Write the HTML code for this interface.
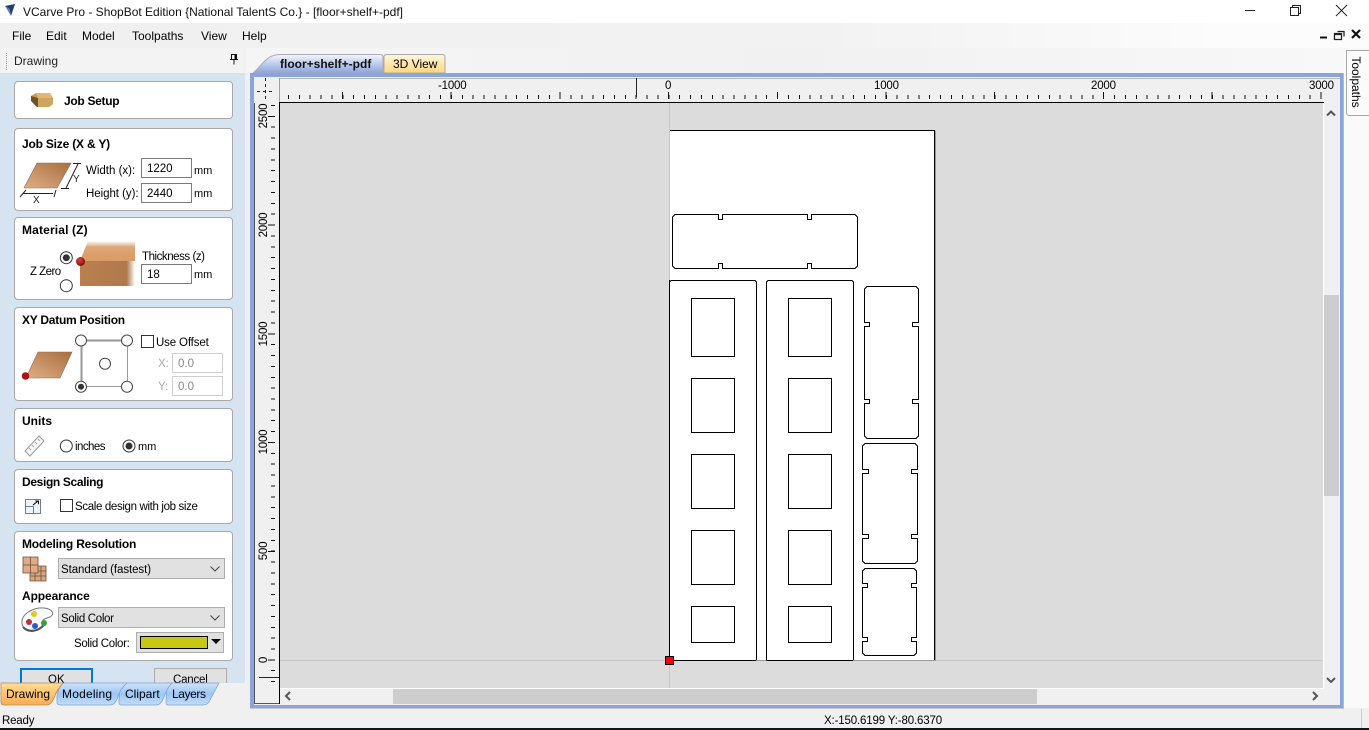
<!DOCTYPE html>
<html><head><meta charset="utf-8"><style>
html,body{margin:0;padding:0}
body{width:1369px;height:730px;overflow:hidden;position:relative;background:#f0f0f0;font:12px "Liberation Sans",sans-serif;color:#000}
.a,.t,.card,.inp,.sel{position:absolute}
.t{white-space:nowrap;line-height:14px}
.t.s{font-size:11.5px;line-height:18px}
.b{font-weight:bold}
.card{background:#fff;border:1px solid #a8a8a8;border-radius:4px;left:14px;width:217px;box-sizing:content-box}
.inp{background:#fff;border:1px solid #7a7a7a;box-sizing:border-box;width:51px;height:20px;padding-left:5px;line-height:20px;font-size:11.500px}
.inp.d{border-color:#cfcfcf;color:#888}
.sel{background:#e1e1e1;border:1px solid #adadad;box-sizing:border-box;left:58px;width:167px;height:21px;padding-left:2px;line-height:23px;font-size:11.500px}
.sel svg{position:absolute;right:3px;top:6px}
.v{position:absolute;transform:rotate(-90deg);transform-origin:center;width:40px;text-align:center;line-height:14px;left:244px;font-size:11.500px;letter-spacing:-.2px}
.r{font-size:11.500px;letter-spacing:-.2px}
svg{position:absolute;overflow:visible}
</style></head><body>

<div class="a" style="left:0;top:0;width:1369px;height:23px;background:#fff"></div>
<svg style="left:0;top:0" width="20" height="20"><path d="M5 6 L15 4 L11 16 L9.5 9 Z" fill="#1f3f70"/><path d="M5 6 L9.5 9 L11 16 Z" fill="#5a7fae"/></svg>
<div class="t" style="left:23px;top:5px;color:#111">VCarve Pro - ShopBot Edition {National TalentS Co.} - [floor+shelf+-pdf]</div>
<svg style="left:1240px;top:0" width="120" height="23" fill="none" stroke="#222"><path d="M5 10.5H15" /><path d="M50.5 7.5h8v8h-8zM52.5 7.5v-2h8v8h-2"/><path d="M96 5L107 16M107 5L96 16"/></svg>

<div class="a" style="left:0;top:23px;width:1369px;height:25px;background:linear-gradient(90deg,#f0f0f0 0,#f2f2f2 60%,#fcfcfc 90%)"></div>
<div class="t" style="left:12px;top:29px">File</div>
<div class="t" style="left:46px;top:29px">Edit</div>
<div class="t" style="left:82px;top:29px">Model</div>
<div class="t" style="left:132px;top:29px">Toolpaths</div>
<div class="t" style="left:201px;top:29px">View</div>
<div class="t" style="left:242px;top:29px">Help</div>
<svg style="left:1315px;top:28px" width="50" height="14"><path d="M5 9.5h7" stroke="#111" stroke-width="2" fill="none"/><path d="M19.5 5.5h7v6h-7zM19.5 6.500h7M22.5 3.500h6.500v5" stroke="#222" stroke-width="1.300" fill="none"/><path d="M37 2L45 10M45 2L37 10" stroke="#111" stroke-width="2.200" fill="none"/></svg>

<div class="a" style="left:246px;top:48px;width:1100px;height:25px;background:linear-gradient(90deg,#f5f5f5,#f1f1f1 50%,#f8f8f8)"></div>
<div class="a" style="left:1344px;top:48px;width:25px;height:660px;background:#fafafa"></div>

<!-- left panel -->
<div class="a" style="left:1px;top:48px;width:244px;height:25px;background:#f3f3f3;border-radius:3px 3px 0 0"></div>
<div class="a" style="left:6px;top:53px;width:1px;height:17px;border-left:1px dotted #999"></div>
<div class="t" style="left:14px;top:54px;color:#222">Drawing</div>
<svg style="left:228px;top:53px" width="12" height="14"><path d="M3.500 1.500h5v5h-5zM2 6.500h8M6 6.500v5" stroke="#111" fill="none"/><path d="M6.500 2h2v4h-2z" fill="#111"/></svg>
<div class="a" style="left:0;top:73px;width:245px;height:610px;background:#d6e3f1"></div>

<div class="card" style="top:81px;height:36px"></div>
<svg style="left:28px;top:90px" width="26" height="20"><path d="M3 6L8 3H22L25 8V14L21 17H9L3 11Z" fill="#c89a55"/><path d="M8 3H22L25 8H10Z" fill="#e0b870"/><path d="M3 6L10 8V17H9L3 11Z" fill="#6b5330"/><path d="M10 8H25V14L21 17H10Z" fill="#cfa45f"/></svg>
<div class="t b" style="left:64px;top:94px;letter-spacing:-.3px">Job Setup</div>

<div class="card" style="top:128px;height:81px"></div>
<div class="t b" style="left:22px;top:137px;letter-spacing:-.2px">Job Size (X &amp; Y)</div>
<svg style="left:18px;top:158px" width="66" height="50"><defs><linearGradient id="w" x1="1" y1="0" x2="0" y2="1"><stop offset="0" stop-color="#a86f3f"/><stop offset="1" stop-color="#e0ae86"/></linearGradient></defs><path d="M19 5H53L39 30H6Z" fill="url(#w)" stroke="#8a6a50" stroke-width=".6"/><path d="M55 5.500h8M43 30.500h8M60 6L48 30M8 32L2 39M38 32L36 39M5 35.500H35" stroke="#222" fill="none"/><text x="15" y="45" font-size="10" fill="#222" font-family="Liberation Sans">X</text><text x="55" y="24" font-size="10" fill="#222" font-family="Liberation Sans">Y</text></svg>
<div class="t s" style="left:86px;top:162px">Width (x):</div>
<div class="inp" style="left:141px;top:158px">1220</div>
<div class="t s" style="left:194px;top:162px;font-size:11px">mm</div>
<div class="t s" style="left:86px;top:185px;letter-spacing:-.05px">Height (y):</div>
<div class="inp" style="left:141px;top:183px">2440</div>
<div class="t s" style="left:194px;top:185px;font-size:11px">mm</div>

<div class="card" style="top:217px;height:81px"></div>
<div class="t b" style="left:22px;top:223px;letter-spacing:.15px">Material (Z)</div>
<svg style="left:56px;top:238px" width="84" height="52"><defs><linearGradient id="m" x1="0" y1="0" x2="1" y2="0"><stop offset="0" stop-color="#b97f4e"/><stop offset=".85" stop-color="#b07a4c"/><stop offset="1" stop-color="#fff"/></linearGradient><linearGradient id="m2" x1="0" y1="0" x2="0" y2="1"><stop offset="0" stop-color="#fff"/><stop offset=".3" stop-color="#dca777"/><stop offset="1" stop-color="#d99b62"/></linearGradient><radialGradient id="r" cx=".4" cy=".35" r=".7"><stop offset="0" stop-color="#e04040"/><stop offset="1" stop-color="#7a0808"/></radialGradient></defs><rect x="24" y="23" width="55" height="25" fill="url(#m)"/><path d="M24 23L32 3H79V23Z" fill="url(#m2)"/><circle cx="10.300" cy="19.700" r="6" fill="#fff" stroke="#333"/><circle cx="10.300" cy="19.700" r="3.500" fill="#333"/><circle cx="10.300" cy="47.700" r="6" fill="#fff" stroke="#333"/><circle cx="24.500" cy="23.500" r="4.500" fill="url(#r)"/></svg>
<div class="t s" style="left:30px;top:263px;letter-spacing:-.55px">Z Zero</div>
<div class="t s" style="left:142px;top:248px;letter-spacing:-.45px">Thickness (z)</div>
<div class="inp" style="left:141px;top:264px">18</div>
<div class="t s" style="left:194px;top:266px;font-size:11px">mm</div>

<div class="card" style="top:307px;height:92px"></div>
<div class="t b" style="left:22px;top:313px;letter-spacing:-.25px">XY Datum Position</div>
<svg style="left:18px;top:330px" width="120" height="62"><defs><linearGradient id="w2" x1="1" y1="0" x2="0" y2="1"><stop offset="0" stop-color="#a86f3f"/><stop offset="1" stop-color="#e0ae86"/></linearGradient></defs><path d="M20 22H54L42 48H8Z" fill="url(#w2)" stroke="#8a6a50" stroke-width=".6"/><circle cx="7.500" cy="46" r="3.800" fill="#a81515"/><path d="M63.500 10.500V56.500M63.500 10.500H109.500" stroke="#999" stroke-width="2" fill="none"/><path d="M109.500 10.500V56.500H63.500" stroke="#999" fill="none"/><g fill="#fff" stroke="#444"><circle cx="63" cy="10.500" r="5.500"/><circle cx="109" cy="10.500" r="5.500"/><circle cx="87" cy="33.700" r="5.500"/><circle cx="63" cy="56.700" r="5.500"/><circle cx="109" cy="56.700" r="5.500"/></g><circle cx="63" cy="56.700" r="3" fill="#333"/></svg>
<div class="a" style="left:141px;top:335px;width:13px;height:13px;border:1px solid #333;box-sizing:border-box;background:#fff"></div>
<div class="t s" style="left:156px;top:334px;letter-spacing:-.15px">Use Offset</div>
<div class="t s" style="left:158px;top:355px;color:#aaa">X:</div>
<div class="inp d" style="left:172px;top:353px">0.0</div>
<div class="t s" style="left:158px;top:378px;color:#aaa">Y:</div>
<div class="inp d" style="left:172px;top:376px">0.0</div>

<div class="card" style="top:408px;height:52px"></div>
<div class="t b" style="left:22px;top:414px">Units</div>
<svg style="left:22px;top:433px" width="120" height="26"><path d="M3 18L17 3L22 8L8 23Z" fill="#f6f6f6" stroke="#999"/><path d="M7 15l2 2M10 12l2 2M13 9l2 2M16 6l2 2" stroke="#aaa" fill="none"/><circle cx="44.300" cy="13" r="6" fill="#fff" stroke="#333"/><circle cx="107" cy="13" r="6" fill="#fff" stroke="#333"/><circle cx="107" cy="13" r="3.500" fill="#333"/></svg>
<div class="t s" style="left:75px;top:438px;letter-spacing:-.55px">inches</div>
<div class="t s" style="left:138px;top:438px;font-size:11px">mm</div>

<div class="card" style="top:469px;height:53px"></div>
<div class="t b" style="left:22px;top:475px;letter-spacing:-.35px">Design Scaling</div>
<svg style="left:24px;top:497px" width="20" height="18"><rect x="1.500" y="2.500" width="15" height="14" fill="#eef3f8" stroke="#6d7f95"/><path d="M1.500 9.500H9.500V16.500M9 8L14 4M11 4h3.500v3.500" stroke="#6d7f95" fill="none"/><path d="M9 8L14 4M11.500 4h3v3" stroke="#111" fill="none"/></svg>
<div class="a" style="left:60px;top:499px;width:13px;height:13px;border:1px solid #333;box-sizing:border-box;background:#fff"></div>
<div class="t s" style="left:75px;top:498px;letter-spacing:-.35px">Scale design with job size</div>

<div class="card" style="top:531px;height:128px"></div>
<div class="t b" style="left:22px;top:537px;letter-spacing:-.2px">Modeling Resolution</div>
<svg style="left:22px;top:556px" width="26" height="28"><path d="M8 10H24V25H8Z" fill="#dba67f" stroke="#6b5040" stroke-width=".8"/><path d="M8 15H24M8 20H24M13 10V25M19 10V25" stroke="#6b5040" stroke-width=".8" fill="none"/><path d="M1 1H16V17H1Z" fill="#e3ab85" stroke="#6b5040" stroke-width=".8"/><path d="M1 9H16M8.500 1V17" stroke="#6b5040" stroke-width=".8" fill="none"/></svg>
<div class="sel" style="top:558px;letter-spacing:-.08px">Standard (fastest)<svg width="12" height="8"><path d="M1.500 1.500L6 6L10.500 1.500" fill="none" stroke="#444"/></svg></div>
<div class="t b" style="left:22px;top:589px;letter-spacing:-.1px">Appearance</div>
<svg style="left:20px;top:605px" width="36" height="30"><path d="M2 18C1 10 12 2 24 3C33 4 35 9 30 12C25 14 22 14 23 17C24 22 16 26 10 25C5 24 2 22 2 18Z" fill="#f8f8f8" stroke="#777"/><path d="M3 22C8 28 18 27 24 20" stroke="#555" stroke-width="2" fill="none"/><circle cx="9" cy="17" r="3" fill="#c43030"/><circle cx="14" cy="9" r="3" fill="#e0c820"/><circle cx="15" cy="21" r="3" fill="#2a5ac8"/><circle cx="24" cy="18" r="3" fill="#38a038"/></svg>
<div class="sel" style="top:607px;letter-spacing:-.33px">Solid Color<svg width="12" height="8"><path d="M1.500 1.500L6 6L10.500 1.500" fill="none" stroke="#444"/></svg></div>
<div class="t s" style="left:74px;top:635px;letter-spacing:-.33px">Solid Color:</div>
<div class="a" style="left:136px;top:632px;width:88px;height:21px;background:#e1e1e1;border:1px solid #adadad;box-sizing:border-box"></div>
<div class="a" style="left:140px;top:636px;width:68px;height:13px;background:#c8c812;border:1px solid #000;box-sizing:border-box"></div>
<svg style="left:210px;top:639px" width="12" height="7"><path d="M1 0H11L6 5Z" fill="#000"/></svg>

<div class="a" style="left:20px;top:668px;width:73px;height:20px;background:#e1e1e1;border:2px solid #0078d7;box-sizing:border-box"></div>
<div class="t s" style="left:48px;top:671px">OK</div>
<div class="a" style="left:154px;top:668px;width:73px;height:20px;background:#e1e1e1;border:1px solid #adadad;box-sizing:border-box"></div>
<div class="t s" style="left:173px;top:671px;letter-spacing:-.2px">Cancel</div>

<!-- bottom tabs -->
<div class="a" style="left:0;top:683px;width:250px;height:26px;background:#f0f0f0"></div>
<svg style="left:0;top:683px" width="225" height="24"><defs><linearGradient id="bt" x1="0" y1="0" x2="0" y2="1"><stop offset="0" stop-color="#cfe3fb"/><stop offset=".5" stop-color="#9cc6f5"/><stop offset="1" stop-color="#c6dcf6"/></linearGradient><linearGradient id="ot" x1="0" y1="0" x2="0" y2="1"><stop offset="0" stop-color="#ffdc96"/><stop offset=".5" stop-color="#ffc56e"/><stop offset="1" stop-color="#f6ad59"/></linearGradient></defs>
<path d="M167 0H219L210 17Q208 22 203 22H168Q166 22 166 19Z" fill="url(#bt)" stroke="#7fa3d6" stroke-width=".8"/>
<path d="M120 0H172C168 4 166 8 164 14Q161 22 156 22H121Q119 22 119 19Z" fill="url(#bt)" stroke="#7fa3d6" stroke-width=".8"/>
<path d="M62 0H127C122 4 120 8 118 14Q115 22 110 22H60Q57 22 57 19V13Q58 6 62 0Z" fill="url(#bt)" stroke="#7fa3d6" stroke-width=".8"/>
<path d="M1 0H63C59 5 56 9 54 15Q51 22 47 22H4Q1 22 1 19Z" fill="url(#ot)" stroke="#b98a50" stroke-width=".8"/></svg>
<div class="t" style="left:6px;top:687px">Drawing</div>
<div class="t" style="left:62px;top:687px;letter-spacing:.2px">Modeling</div>
<div class="t" style="left:125px;top:687px">Clipart</div>
<div class="t" style="left:172px;top:687px;letter-spacing:-.4px">Layers</div>

<!-- doc tabs -->
<svg style="left:250px;top:52px" width="200" height="22"><defs><linearGradient id="dt" x1="0" y1="0" x2="0" y2="1"><stop offset="0" stop-color="#f3f6fc"/><stop offset="1" stop-color="#8aa5de"/></linearGradient><linearGradient id="yt" x1="0" y1="0" x2="0" y2="1"><stop offset="0" stop-color="#fff6e0"/><stop offset="1" stop-color="#ffd679"/></linearGradient></defs>
<path d="M134 21V5Q134 2.500 137 2.500H192Q195 2.500 195 5V21Z" fill="url(#yt)" stroke="#aaa"/>
<path d="M3 21C12 14 16 2.500 30 2.500H130Q133 2.500 133 5V21Z" fill="url(#dt)" stroke="#aab"/></svg>
<div class="t b" style="left:280px;top:57px;color:#111">floor+shelf+-pdf</div>
<div class="t" style="left:393px;top:57px">3D View</div>

<!-- toolpaths tab -->
<div class="a" style="left:1346px;top:50px;width:24px;height:66px;background:#fbfbfb;border:1px solid #a8a8a8;border-radius:0 0 0 3px;box-sizing:border-box"></div>
<div class="t" style="left:1328px;top:75px;width:56px;text-align:center;transform:rotate(90deg)">Toolpaths</div>

<!-- frame -->
<div class="a" style="left:250px;top:73px;width:1093px;height:635px;background:#8aa5de"></div>
<div class="a" style="left:1343px;top:73px;width:1px;height:636px;background:#bbb"></div>
<div class="a" style="left:250px;top:708px;width:1094px;height:1px;background:#c8c8c8"></div>
<div class="a" style="left:254px;top:77px;width:1086px;height:628px;background:#f0f0f0"></div>
<div class="a" style="left:254px;top:103px;width:1px;height:600px;background:#555"></div>
<div class="a" style="left:254px;top:703px;width:26px;height:1px;background:#555"></div>

<!-- canvas -->
<div class="a" style="left:280px;top:103px;width:1043px;height:585px;background:#dcdcdc"></div>
<div class="a" style="left:279px;top:102px;width:1045px;height:1px;background:#000"></div>
<div class="a" style="left:279px;top:102px;width:1px;height:602px;background:#000"></div>
<div class="a" style="left:280px;top:688px;width:1044px;height:1px;background:#fff"></div>
<div class="a" style="left:1323px;top:103px;width:1px;height:586px;background:#fff"></div>

<!-- scrollbars -->
<div class="a" style="left:1324px;top:295px;width:15px;height:201px;background:#cdcdcd"></div>
<div class="a" style="left:393px;top:689px;width:644px;height:15px;background:#cdcdcd"></div>
<svg style="left:0;top:0" width="1369" height="730" fill="none" stroke="#555" stroke-width="2"><path d="M1327 115.500L1331 111.500L1335 115.500M1327 678L1331 682L1335 678M1313 692L1317 696L1313 700M290 692L286 696L290 700"/></svg>

<!-- drawing -->
<svg style="left:0;top:0" width="1369" height="730">
<path d="M670 130H934V660H670Z" fill="#fff"/>
<path d="M669.500 103V688M280 660.500H1323" stroke="#c8c8c8" fill="none" shape-rendering="crispEdges"/>
<path d="M670 130H934V660H670Z" fill="#fff"/>
<g fill="none" stroke="#000" shape-rendering="crispEdges">
<path d="M670 130.500H934.500V660" />
<path d="M669.500 280V660.500H756.500M766.500 660.500H853.500"/>
<path d="M675 214.500H718.500V219.500H722.500V214.500H807.500V219.500H811.500V214.500H855L857.500 217V266L855 268.500H811.500V263.500H807.500V268.500H722.500V263.500H718.500V268.500H675L672.500 266V217Z"/>
<path d="M669.500 660.500V282L671 280.500H755L756.500 282V660.500"/>
<path d="M766.500 660.500V282L768 280.500H852L853.500 282V660.500"/>
<path d="M691.500 298.500H734.500V356.500H691.500ZM691.500 378.500H734.500V432.500H691.500ZM691.500 454.500H734.500V508.500H691.500ZM691.500 530.500H734.500V584.500H691.500ZM691.500 606.500H734.500V642.500H691.500Z"/>
<path d="M788.500 298.500H831.500V356.500H788.500ZM788.500 378.500H831.500V432.500H788.500ZM788.500 454.500H831.500V508.500H788.500ZM788.500 530.500H831.500V584.500H788.500ZM788.500 606.500H831.500V642.500H788.500Z"/>
<path d="M867 286.500H916L918.500 289V322.500H912.500V326.500H918.500V399.500H912.500V403.500H918.500V436L916 438.500H867L864.500 436V403.500H869.500V399.500H864.500V326.500H869.500V322.500H864.500V289Z"/>
<path d="M865 443.500H915L917.500 446V469.500H911.500V473.500H917.500V534.500H911.500V538.500H917.500V561L915 563.500H865L862.500 561V538.500H868.500V534.500H862.500V473.500H868.500V469.500H862.500V446Z"/>
<path d="M865 568.500H914L916.500 571V583.500H911.500V587.500H916.500V637.500H911.500V641.500H916.500V653L914 655.500H865L862.500 653V641.500H867.500V637.500H862.500V587.500H867.500V583.500H862.500V571Z"/>
</g>
<path d="M756 660.500H766M853 660.500H935.500M935.500 131V661" stroke="#999" fill="none" shape-rendering="crispEdges"/>
<rect x="665.500" y="656.500" width="8" height="8" fill="#f00" stroke="#000" shape-rendering="crispEdges"/>
</svg>

<!-- top ruler -->
<div class="a" style="left:279px;top:78px;width:1061px;height:1px;background:#b8b8b8"></div>
<div class="a" style="left:279px;top:78px;width:1px;height:24px;background:#a0a0a0"></div>
<svg style="left:0;top:0" width="1369" height="730" shape-rendering="crispEdges" fill="none" stroke="#111">
<path d="M287.900 97H1325" stroke-width="4" stroke-dasharray="1 9.870"/>
<path d="M342 95.500H1325" stroke-width="7" stroke-dasharray="1 107.700"/>
<path d="M636.500 78V97" stroke="#222"/>
<path d="M273 105V690" stroke-width="4" stroke-dasharray="1 9.870"/>
<path d="M271.500 116V690" stroke-width="7" stroke-dasharray="1 107.700"/>
<path d="M259 677.500H279" stroke="#222"/>
<path d="M265.500 78V100" stroke-dasharray="3 3" stroke="#222"/>
<path d="M257 91.500H273" stroke-dasharray="3 3" stroke="#222"/>
</svg>
<div class="t r" style="left:438px;top:79px">-1000</div>
<div class="t r" style="left:665px;top:79px">0</div>
<div class="t r" style="left:874px;top:79px">1000</div>
<div class="t r" style="left:1091px;top:79px">2000</div>
<div class="t r" style="left:1309px;top:79px">3000</div>
<div class="v" style="top:109px">2500</div>
<div class="v" style="top:218px">2000</div>
<div class="v" style="top:327px">1500</div>
<div class="v" style="top:435px">1000</div>
<div class="v" style="top:544px">500</div>
<div class="v" style="top:653px">0</div>

<!-- status -->
<div class="a" style="left:0;top:709px;width:1369px;height:19px;background:#f0f0f0"></div>
<div class="t s" style="left:2px;top:712px;letter-spacing:-.2px">Ready</div>
<div class="t s" style="left:824px;top:712px;letter-spacing:-.15px">X:-150.6199 Y:-80.6370</div>
<div class="a" style="left:1361px;top:709px;width:1px;height:19px;background:#ccc"></div>
<div class="a" style="left:0;top:728px;width:1369px;height:2px;background:#101518"></div>
</body></html>
